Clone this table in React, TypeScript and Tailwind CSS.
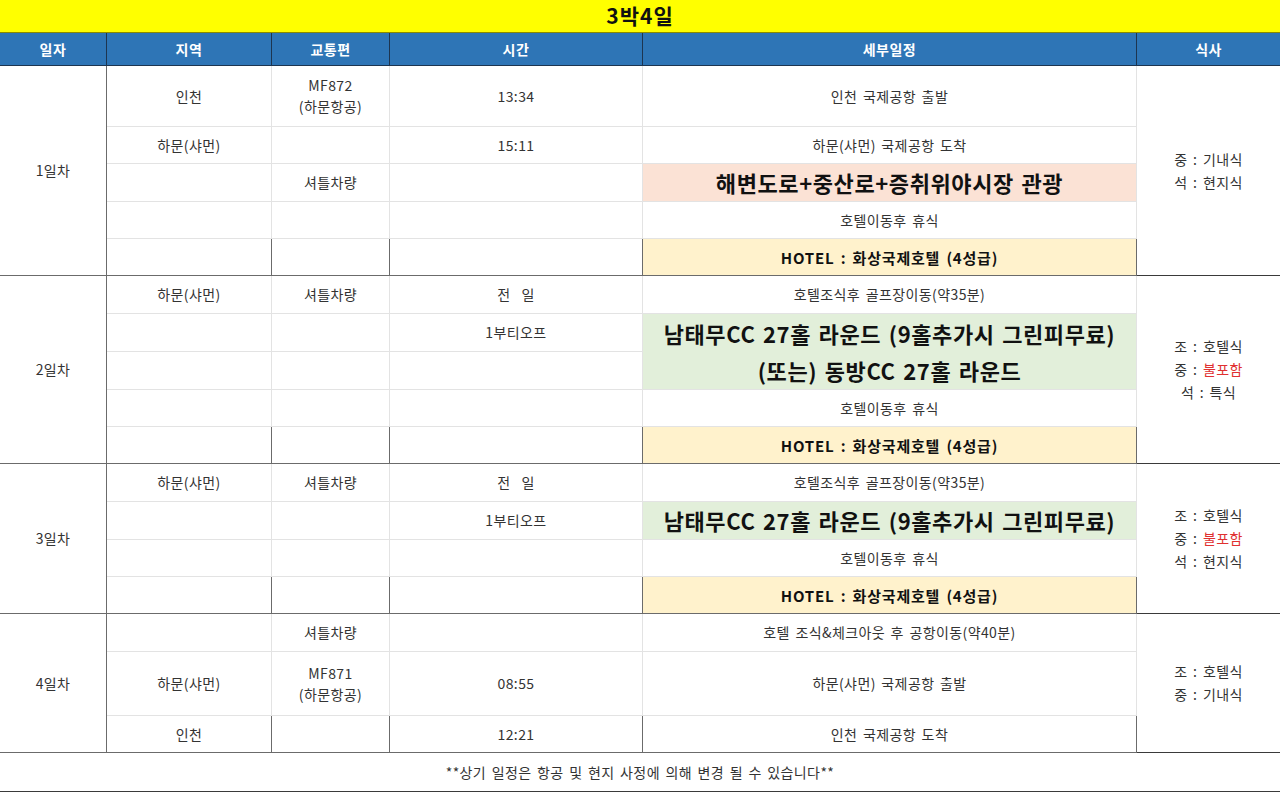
import React from "react";

// row borders: light inside a day, dark between days
const LIGHT = "border-b border-[#e3e3e3]";
const DARK = "border-b border-[#3a3a3a]";
const COL = "border-r border-[#6b6b6b]";
const TEXT = "text-[14px] tracking-[0.4px] [word-spacing:2px] text-[#333]";

type CellProps = {
  children?: React.ReactNode;
  last?: boolean;
  right?: boolean;
  className?: string;
  rowSpan?: number;
};

function Cell({ children, last, right = true, className = "", rowSpan }: CellProps) {
  return (
    <td
      rowSpan={rowSpan}
      className={`${last ? DARK : LIGHT} ${right ? COL : ""} p-0 text-center align-middle leading-[21px] ${TEXT} ${className}`}
    >
      {children}
    </td>
  );
}

function Big({ children }: { children: React.ReactNode }) {
  return (
    <span className="text-[22px] font-bold leading-[37px] tracking-[0.6px] [word-spacing:2px] text-[#111]">
      {children}
    </span>
  );
}

function Hotel({ last }: { last?: boolean }) {
  return (
    <Cell last={last} className="bg-[#fff2cc] !text-[15px] font-bold !tracking-[0.8px] !text-[#111]">
      HOTEL : 화상국제호텔 (4성급)
    </Cell>
  );
}

function Meal({ rows, span }: { rows: React.ReactNode[]; span: number }) {
  return (
    <td rowSpan={span} className={`${DARK} p-0 text-center align-middle leading-[23px] ${TEXT}`}>
      {rows.map((r, i) => (
        <div key={i}>{r}</div>
      ))}
    </td>
  );
}

function Day({ label, span }: { label: string; span: number }) {
  return (
    <td rowSpan={span} className={`${DARK} ${COL} p-0 text-center align-middle ${TEXT}`}>
      {label}
    </td>
  );
}

const headers = ["일자", "지역", "교통편", "시간", "세부일정", "식사"];

export default function App() {
  return (
    <div className="w-[1280px] h-[792px] bg-white font-['Noto_Sans_CJK_KR','Noto_Sans',sans-serif]">
      <table className="w-[1280px] table-fixed border-separate border-spacing-0">
        <colgroup>
          <col className="w-[107px]" />
          <col className="w-[165px]" />
          <col className="w-[118px]" />
          <col className="w-[253px]" />
          <col className="w-[494px]" />
          <col className="w-[143px]" />
        </colgroup>
        <tbody>
          {/* title */}
          <tr className="h-[33px]">
            <td
              colSpan={6}
              className="border-b border-[#8a8a00] bg-[#ffff00] p-0 text-center align-middle text-[21px] font-bold tracking-[1px] text-[#111]"
            >
              3박4일
            </td>
          </tr>

          {/* header */}
          <tr className="h-[33px]">
            {headers.map((h, i) => (
              <td
                key={h}
                className={`border-b border-[#1d3550] bg-[#2e75b6] p-0 text-center align-middle text-[14px] font-bold tracking-[0.5px] text-white ${
                  i < 5 ? "border-r border-r-[#1d3550]" : ""
                }`}
              >
                {h}
              </td>
            ))}
          </tr>

          {/* 1일차 */}
          <tr className="h-[61px]">
            <Day label="1일차" span={5} />
            <Cell>인천</Cell>
            <Cell>
              MF872
              <br />
              (하문항공)
            </Cell>
            <Cell>13:34</Cell>
            <Cell>인천 국제공항 출발</Cell>
            <Meal span={5} rows={["중 : 기내식", "석 : 현지식"]} />
          </tr>
          <tr className="h-[37px]">
            <Cell>하문(샤먼)</Cell>
            <Cell />
            <Cell>15:11</Cell>
            <Cell>하문(샤먼) 국제공항 도착</Cell>
          </tr>
          <tr className="h-[38px]">
            <Cell />
            <Cell>셔틀차량</Cell>
            <Cell />
            <Cell className="bg-[#fbe2d5]">
              <Big>해변도로+중산로+증취위야시장 관광</Big>
            </Cell>
          </tr>
          <tr className="h-[37px]">
            <Cell />
            <Cell />
            <Cell />
            <Cell>호텔이동후 휴식</Cell>
          </tr>
          <tr className="h-[37px]">
            <Cell last />
            <Cell last />
            <Cell last />
            <Hotel last />
          </tr>

          {/* 2일차 */}
          <tr className="h-[38px]">
            <Day label="2일차" span={5} />
            <Cell>하문(샤먼)</Cell>
            <Cell>셔틀차량</Cell>
            <Cell className="whitespace-pre">전  일</Cell>
            <Cell>호텔조식후 골프장이동(약35분)</Cell>
            <Meal
              span={5}
              rows={[
                "조 : 호텔식",
                <>
                  중 : <span className="text-[#e03030]">불포함</span>
                </>,
                "석 : 특식",
              ]}
            />
          </tr>
          <tr className="h-[38px]">
            <Cell />
            <Cell />
            <Cell>1부티오프</Cell>
            <Cell rowSpan={2} className="bg-[#e2efda]">
              <Big>남태무CC 27홀 라운드 (9홀추가시 그린피무료)</Big>
              <br />
              <Big>(또는) 동방CC 27홀 라운드</Big>
            </Cell>
          </tr>
          <tr className="h-[38px]">
            <Cell />
            <Cell />
            <Cell />
          </tr>
          <tr className="h-[37px]">
            <Cell />
            <Cell />
            <Cell />
            <Cell>호텔이동후 휴식</Cell>
          </tr>
          <tr className="h-[37px]">
            <Cell last />
            <Cell last />
            <Cell last />
            <Hotel last />
          </tr>

          {/* 3일차 */}
          <tr className="h-[38px]">
            <Day label="3일차" span={4} />
            <Cell>하문(샤먼)</Cell>
            <Cell>셔틀차량</Cell>
            <Cell className="whitespace-pre">전  일</Cell>
            <Cell>호텔조식후 골프장이동(약35분)</Cell>
            <Meal
              span={4}
              rows={[
                "조 : 호텔식",
                <>
                  중 : <span className="text-[#e03030]">불포함</span>
                </>,
                "석 : 현지식",
              ]}
            />
          </tr>
          <tr className="h-[38px]">
            <Cell />
            <Cell />
            <Cell>1부티오프</Cell>
            <Cell className="bg-[#e2efda]">
              <Big>남태무CC 27홀 라운드 (9홀추가시 그린피무료)</Big>
            </Cell>
          </tr>
          <tr className="h-[37px]">
            <Cell />
            <Cell />
            <Cell />
            <Cell>호텔이동후 휴식</Cell>
          </tr>
          <tr className="h-[37px]">
            <Cell last />
            <Cell last />
            <Cell last />
            <Hotel last />
          </tr>

          {/* 4일차 */}
          <tr className="h-[38px]">
            <Day label="4일차" span={3} />
            <Cell />
            <Cell>셔틀차량</Cell>
            <Cell />
            <Cell>호텔 조식&amp;체크아웃 후 공항이동(약40분)</Cell>
            <Meal span={3} rows={["조 : 호텔식", "중 : 기내식"]} />
          </tr>
          <tr className="h-[64px]">
            <Cell>하문(샤먼)</Cell>
            <Cell>
              MF871
              <br />
              (하문항공)
            </Cell>
            <Cell>08:55</Cell>
            <Cell>하문(샤먼) 국제공항 출발</Cell>
          </tr>
          <tr className="h-[37px]">
            <Cell last>인천</Cell>
            <Cell last />
            <Cell last>12:21</Cell>
            <Cell last>인천 국제공항 도착</Cell>
          </tr>

          {/* footer */}
          <tr className="h-[39px]">
            <td colSpan={6} className={`${DARK} p-0 text-center align-middle ${TEXT}`}>
              **상기 일정은 항공 및 현지 사정에 의해 변경 될 수 있습니다**
            </td>
          </tr>
        </tbody>
      </table>
    </div>
  );
}
